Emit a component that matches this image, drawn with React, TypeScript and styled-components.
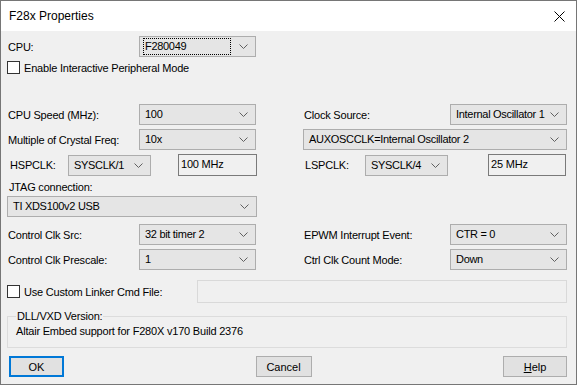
import * as React from 'react'
import styled, { createGlobalStyle } from 'styled-components'

const Global = createGlobalStyle`
  html, body {
    margin: 0;
    padding: 0;
    background: #f0f0f0;
  }
  body {
    font-family: "Liberation Sans", Arial, sans-serif;
    font-size: 11px;
    letter-spacing: -0.2px;
    color: #000;
  }
`

const Window = styled.div`
  width: 577px;
  height: 385px;
  box-sizing: border-box;
  border: 1px solid #767676;
  background: #f0f0f0;
  display: flex;
  flex-direction: column;
`

const TitleBar = styled.div`
  height: 30px;
  background: #fff;
  display: flex;
  align-items: center;
  justify-content: space-between;
  padding: 0 11px 0 8px;
  font-size: 12px;
  letter-spacing: 0;
`

const Body = styled.div`
  padding: 5px 9px 0 6px;
  display: flex;
  flex-direction: column;
`

const Row = styled.div<{ $top?: number; $cols?: string; $h?: number }>`
  display: grid;
  grid-template-columns: ${p => p.$cols || '132px 117px 47px 147px 117px'};
  align-items: center;
  height: ${p => p.$h || 21}px;
  margin-top: ${p => p.$top || 0}px;
`

const Label = styled.span<{ $pad?: number }>`
  padding-left: ${p => p.$pad || 1}px;
  white-space: nowrap;
`

const ComboBox = styled.div`
  height: 21px;
  box-sizing: border-box;
  border: 1px solid #adadad;
  background: #e5e5e5;
  display: flex;
  align-items: center;
  padding: 0 7px 0 3px;
  white-space: nowrap;
  overflow: hidden;
`

const ComboText = styled.span<{ $focus?: boolean }>`
  flex: 1;
  min-width: 0;
  overflow: hidden;
  padding: 1px 1px;
  border: 1px dotted ${p => (p.$focus ? '#000' : 'transparent')};
  margin-right: ${p => (p.$focus ? 8 : 2)}px;
  line-height: 13px;
  letter-spacing: -0.3px;
`

const TextBox = styled.div<{ $disabled?: boolean }>`
  height: ${p => (p.$disabled ? 23 : 22)}px;
  box-sizing: border-box;
  border: 1px solid ${p => (p.$disabled ? '#d9d9d9' : '#7a7a7a')};
  background: #f0f0f0;
  padding: 3px 2px;
  white-space: nowrap;
`

const CheckRow = styled.label<{ $top?: number }>`
  display: flex;
  align-items: center;
  gap: 4px;
  margin-top: ${p => p.$top || 0}px;
  white-space: nowrap;
`

const CheckBox = styled.span`
  width: 13px;
  height: 13px;
  box-sizing: border-box;
  border: 1px solid #333;
  background: #fff;
`

const LinkerRow = styled.div`
  display: grid;
  grid-template-columns: 190px 1fr;
  align-items: center;
  margin-top: 10px;
`

const Group = styled.fieldset`
  margin: 8px 0 0;
  padding: 1px 8px 10px;
  border: 1px solid #dcdcdc;
  height: 37px;
  box-sizing: border-box;
`

const Legend = styled.legend`
  padding: 0 1px;
  margin-left: 0;
  line-height: 11px;
`

const GroupText = styled.div`
  margin-top: 2px;
  white-space: nowrap;
`

const ButtonBar = styled.div`
  display: flex;
  justify-content: space-between;
  align-items: center;
  margin-top: 8px;
  padding: 0 0 0 2px;
`

const Button = styled.button<{ $default?: boolean; $w: number }>`
  width: ${p => p.$w}px;
  height: 21px;
  box-sizing: border-box;
  font: inherit;
  color: #000;
  background: #e1e1e1;
  border: ${p => (p.$default ? '2px solid #0078d7' : '1px solid #adadad')};
  padding: 0;
`

const Chevron = () => (
  <svg width="9" height="5" viewBox="0 0 9 5" style={{ flexShrink: 0 }}>
    <path d="M0.5 0.5 L4.5 4.5 L8.5 0.5" fill="none" stroke="#606060" strokeWidth="1" />
  </svg>
)

const Combo: React.FC<{ value: string; focus?: boolean }> = ({ value, focus }) => (
  <ComboBox>
    <ComboText $focus={focus}>{value}</ComboText>
    <Chevron />
  </ComboBox>
)

const CloseIcon = () => (
  <svg width="11" height="11" viewBox="0 0 11 11">
    <path d="M0.5 0.5 L10.5 10.5 M10.5 0.5 L0.5 10.5" stroke="#000" strokeWidth="1" />
  </svg>
)

const Gap = styled.span``

export default function App() {
  return (
    <>
      <Global />
      <Window>
        <TitleBar>
          <span>F28x Properties</span>
          <CloseIcon />
        </TitleBar>
        <Body>
          <Row>
            <Label>CPU:</Label>
            <Combo value="F280049" focus />
          </Row>
          <CheckRow $top={4}>
            <CheckBox />
            <span>Enable Interactive Peripheral Mode</span>
          </CheckRow>

          <Row $top={30}>
            <Label>CPU Speed (MHz):</Label>
            <Combo value="100" />
            <Gap />
            <Label>Clock Source:</Label>
            <Combo value="Internal Oscillator 1" />
          </Row>
          <Row $top={4} $cols="132px 117px 47px 264px">
            <Label>Multiple of Crystal Freq:</Label>
            <Combo value="10x" />
            <Gap />
            <Combo value="AUXOSCCLK=Internal Oscillator 2" />
          </Row>
          <Row $top={4} $cols="61px 83px 27px 79px 47px 61px 83px 40px 78px">
            <Label $pad={3}>HSPCLK:</Label>
            <Combo value="SYSCLK/1" />
            <Gap />
            <TextBox>100 MHz</TextBox>
            <Gap />
            <Label>LSPCLK:</Label>
            <Combo value="SYSCLK/4" />
            <Gap />
            <TextBox>25 MHz</TextBox>
          </Row>
          <Row $top={3} $h={18} $cols="1fr">
            <Label $pad={2}>JTAG connection:</Label>
          </Row>
          <Row $cols="250px">
            <Combo value="TI XDS100v2 USB" />
          </Row>
          <Row $top={7}>
            <Label>Control Clk Src:</Label>
            <Combo value="32 bit timer 2" />
            <Gap />
            <Label>EPWM Interrupt Event:</Label>
            <Combo value="CTR = 0" />
          </Row>
          <Row $top={4}>
            <Label>Control Clk Prescale:</Label>
            <Combo value="1" />
            <Gap />
            <Label>Ctrl Clk Count Mode:</Label>
            <Combo value="Down" />
          </Row>
          <LinkerRow>
            <CheckRow>
              <CheckBox />
              <span>Use Custom Linker Cmd File:</span>
            </CheckRow>
            <TextBox $disabled />
          </LinkerRow>
          <Group>
            <Legend>DLL/VXD Version:</Legend>
            <GroupText>Altair Embed support for F280X v170 Build 2376</GroupText>
          </Group>
          <ButtonBar>
            <Button $default $w={55}>OK</Button>
            <Button $w={56}>Cancel</Button>
            <Button $w={64}><u>H</u>elp</Button>
          </ButtonBar>
        </Body>
      </Window>
    </>
  )
}
